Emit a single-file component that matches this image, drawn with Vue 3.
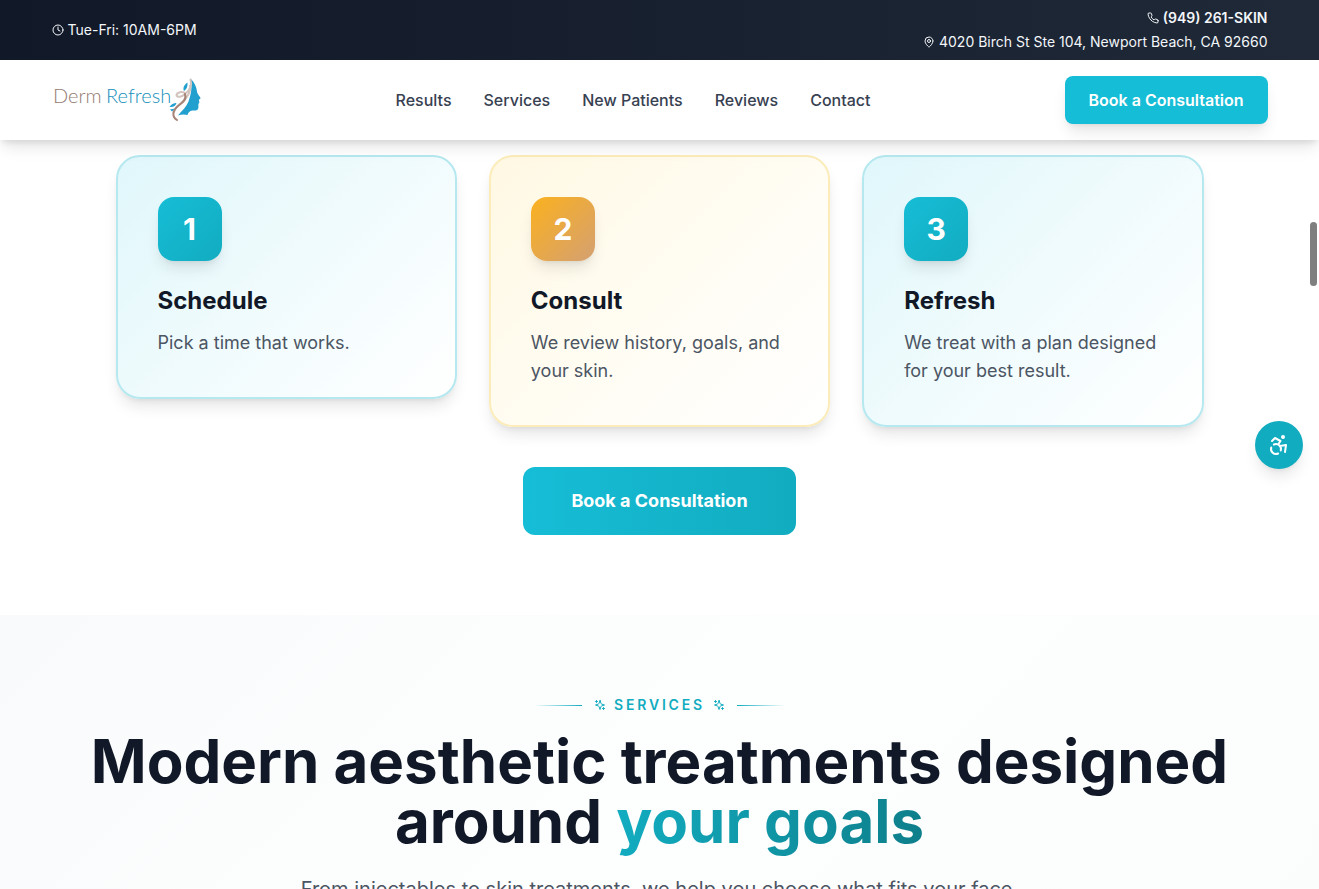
<script setup>
const links = ['Results', 'Services', 'New Patients', 'Reviews', 'Contact']
const steps = [
  { title: 'Schedule', text: 'Pick a time that works.', tone: 'teal' },
  { title: 'Consult', text: 'We review history, goals, and your skin.', tone: 'amber' },
  { title: 'Refresh', text: 'We treat with a plan designed for your best result.', tone: 'teal' }
]
</script>

<template>
  <div class="page">
    <header class="site-header">
      <div class="topbar">
        <div class="container topbar-row">
          <p class="info">
            <svg class="icon" viewBox="0 0 24 24"><circle cx="12" cy="12" r="10" /><path d="M12 6v6l4 2" /></svg>
            Tue-Fri: 10AM-6PM
          </p>
          <div class="contact">
            <a class="info phone" href="#call">
              <svg class="icon" viewBox="0 0 24 24"><path d="M22 16.92v3a2 2 0 0 1-2.18 2 19.79 19.79 0 0 1-8.63-3.07 19.5 19.5 0 0 1-6-6 19.79 19.79 0 0 1-3.07-8.67A2 2 0 0 1 4.11 2h3a2 2 0 0 1 2 1.72c.13.96.36 1.9.7 2.81a2 2 0 0 1-.45 2.11L8.09 9.91a16 16 0 0 0 6 6l1.27-1.27a2 2 0 0 1 2.11-.45c.91.34 1.85.57 2.81.7A2 2 0 0 1 22 16.92z" /></svg>
              (949) 261-SKIN
            </a>
            <a class="info" href="#map">
              <svg class="icon" viewBox="0 0 24 24"><path d="M20 10c0 5-5.5 10.2-7.4 11.8a1 1 0 0 1-1.2 0C9.500 20.200 4 15 4 10a8 8 0 0 1 16 0" /><circle cx="12" cy="10" r="3" /></svg>
              4020 Birch St Ste 104, Newport Beach, CA 92660
            </a>
          </div>
        </div>
      </div>
      <div class="navbar">
        <div class="container nav-row">
          <a class="logo" href="#home" aria-label="Derm Refresh">
            <svg width="150" height="48" viewBox="0 0 150 48">
              <text class="logo-text derm" x="1" y="27">Derm</text>
              <text class="logo-text refresh" x="54" y="27">Refresh</text>
              <path class="face" d="M138.500 2.500c4 4 6 8 6.500 13 .2 3 3.500 5 3.500 7l-1.700 1.200 .6 2.800-1 1.500v3.500c0 3-3 3.300-6 3-3 .3-4 2-5 4.500-3-.8-6-.7-9.400.5 4-5 8-8 10.500-14 2.500-7 4-14 2-23z" />
              <path class="face" d="M135.500 6.500c-3 2-5 5-3.500 8.500 2.500-1.500 4-4.500 3.500-8.500zM117.500 31c2-3 4-4 7-4-1 3-3 4.500-7 4zM118 33.500l5-1-3 3z" />
              <path class="hair pale" d="M138.500 3.500c2 7-1 11-5 14-4 4-8 4-9 2 0-3 6-5 9-2" />
              <path class="hair pale" d="M138 10c1 8-4 13-9 17-4 3-6 5-7 9" />
              <path class="hair" d="M133 18c2 6-3 9-7 12-6 5-6 11-1 14" />
            </svg>
          </a>
          <nav class="nav-links" aria-label="Main">
            <a v-for="link in links" :key="link" href="#">{{ link }}</a>
          </nav>
          <button class="nav-cta" type="button">Book a Consultation</button>
        </div>
      </div>
    </header>

    <main>
      <section class="steps">
        <div class="step-grid">
          <article v-for="(step, i) in steps" :key="step.title" class="step" :class="step.tone">
            <div class="number">{{ i + 1 }}</div>
            <h3>{{ step.title }}</h3>
            <p>{{ step.text }}</p>
          </article>
        </div>
        <button class="main-cta" type="button">Book a Consultation</button>
      </section>

      <section class="services">
        <div class="eyebrow">
          <span class="rule left"></span>
          <span class="eyebrow-label">
            <svg v-for="n in 2" :key="n" class="sparkle" :class="{ last: n === 2 }" viewBox="0 0 24 24"><path d="m12 3-1.900 5.800a2 2 0 0 1-1.300 1.300L3 12l5.800 1.900a2 2 0 0 1 1.300 1.300L12 21l1.900-5.800a2 2 0 0 1 1.300-1.300L21 12l-5.800-1.900a2 2 0 0 1-1.300-1.300ZM5 3v4M3 5h4M19 17v4M17 19h4" /></svg>
            <span class="eyebrow-text">Services</span>
          </span>
          <span class="rule right"></span>
        </div>
        <h2>Modern aesthetic treatments designed around <span class="accent">your goals</span></h2>
        <p class="lead">From injectables to skin treatments, we help you choose what fits your face,</p>
      </section>
    </main>

    <button class="access" type="button" aria-label="Accessibility options">
      <svg viewBox="0 0 24 24"><circle class="head" cx="16" cy="4" r="1" /><path d="m18 19 1-7-6 1M5 8l3-3 5.500 3-2.360 3.500M4.240 14.500a5 5 0 0 0 6.880 6M13.760 17.500a5 5 0 0 0-6.880-6" /></svg>
    </button>
    <div class="scroll-thumb" aria-hidden="true"></div>
  </div>
</template>

<style>
html, body { margin: 0; height: 100%; overflow: hidden; }
</style>

<style scoped>
.page { height: 100vh; overflow: hidden; background: #fff; color: #111827; font-family: Inter, "Liberation Sans", sans-serif; }
.page * { box-sizing: border-box; }
a { color: inherit; text-decoration: none; }
h2, h3, p { margin: 0; }
button { font-family: inherit; border: 0; cursor: pointer; color: #fff; }
svg { fill: none; stroke: currentColor; stroke-width: 2; stroke-linecap: round; stroke-linejoin: round; }
.container { max-width: 1280px; margin: 0 auto; padding: 0 32px; }

.site-header { position: relative; z-index: 2; box-shadow: 0 10px 15px -3px rgb(0 0 0 / 0.1), 0 4px 6px -2px rgb(0 0 0 / 0.1); }
.topbar { background: linear-gradient(90deg, #111827, #1f2937); color: #f3f6fa; }
.topbar-row { display: flex; justify-content: space-between; align-items: center; min-height: 60px; }
.info { display: flex; align-items: center; gap: 4px; font-size: 14px; line-height: 20px; }
.icon { width: 12px; height: 12px; flex: none; }
.contact { display: flex; flex-direction: column; align-items: flex-end; gap: 4px; }
.phone { font-weight: 600; }

.navbar { background: #fff; }
.nav-row { display: flex; justify-content: space-between; align-items: center; min-height: 80px; }
.logo { display: flex; }
.logo-text { font-family: Lato, sans-serif; font-weight: 300; font-size: 20px; stroke: none; }
.derm { fill: #947c71; }
.refresh { fill: #168fbb; }
.face { fill: #219fce; stroke: none; }
.hair { stroke: #a58376; stroke-width: 2; }
.pale { stroke: #d3c4bd; }
.nav-links { display: flex; gap: 32px; font-size: 16px; line-height: 24px; font-weight: 500; color: #374151; }
.nav-cta { padding: 12px 24px; border-radius: 8px; background: #16bdd6; font-size: 16px; line-height: 24px; font-weight: 600; box-shadow: 0 10px 15px -3px rgb(0 0 0 / 0.1), 0 4px 6px -4px rgb(0 0 0 / 0.1); }

.steps { display: flex; flex-direction: column; align-items: center; gap: 40px; padding: 15px 32px 80px; }
.step-grid { display: grid; grid-template-columns: repeat(3, 1fr); align-items: start; gap: 32px; width: 100%; max-width: 1088px; }
.step { padding: 40px; border: 2px solid; border-radius: 24px; box-shadow: 0 10px 15px -3px rgb(0 0 0 / 0.1), 0 4px 6px -4px rgb(0 0 0 / 0.1); }
.teal { border-color: #b5e8ef; background: linear-gradient(135deg, #e0f7fb, #f0fbfd 50%, #fff); }
.amber { border-color: #fbecba; background: linear-gradient(135deg, #fff8e3, #fffcf2 50%, #fff); }
.number { display: grid; place-items: center; width: 64px; height: 64px; margin-bottom: 24px; border-radius: 16px; color: #fff; font-size: 30px; line-height: 36px; font-weight: 700; box-shadow: 0 10px 15px -3px rgb(0 0 0 / 0.1), 0 4px 6px -4px rgb(0 0 0 / 0.1); }
.teal .number { background: linear-gradient(135deg, #16bdd6, #12acc0); }
.amber .number { background: linear-gradient(135deg, #fbb11e, #d4a072); }
h3 { margin-bottom: 12px; font-size: 24px; line-height: 32px; font-weight: 700; }
.step p { font-size: 18px; line-height: 28px; color: #4b5563; }
.main-cta { padding: 20px 48px; border-radius: 12px; background: linear-gradient(90deg, #16bdd6, #12acc0); font-size: 18px; line-height: 28px; font-weight: 700; }

.services { padding: 80px 32px; background: linear-gradient(135deg, #f9fafb, #fdfefe 50%, #fbfcfc); text-align: center; }
.eyebrow { display: flex; align-items: center; justify-content: center; gap: 12px; margin-bottom: 16px; color: #12acc0; }
.rule { width: 48px; height: 1px; }
.left { background: linear-gradient(90deg, transparent, #12acc0); }
.right { background: linear-gradient(90deg, #12acc0, transparent); }
.eyebrow-label { display: flex; align-items: center; gap: 8px; font-size: 14px; line-height: 20px; font-weight: 600; letter-spacing: 0.2em; text-transform: uppercase; }
.sparkle { width: 12px; height: 12px; }
.last { order: 1; }
h2 { max-width: 1216px; margin: 0 auto 24px; font-size: 60px; line-height: 60px; font-weight: 700; }
.accent { background: linear-gradient(90deg, #12acc0, #0e7f8b); background-clip: text; color: transparent; }
.lead { font-size: 20px; line-height: 28px; color: #4b5563; }

.access { position: fixed; top: 421px; right: 16px; display: grid; place-items: center; width: 48px; height: 48px; padding: 0; border-radius: 50%; background: #12acc0; box-shadow: 0 10px 15px -3px rgb(0 0 0 / 0.1), 0 4px 6px -4px rgb(0 0 0 / 0.1); }
.access svg { width: 24px; height: 24px; }
.head { fill: currentColor; }
.scroll-thumb { position: fixed; top: 222px; right: 2px; width: 7px; height: 64px; border-radius: 4px; background: #7f7f7f; }
</style>
